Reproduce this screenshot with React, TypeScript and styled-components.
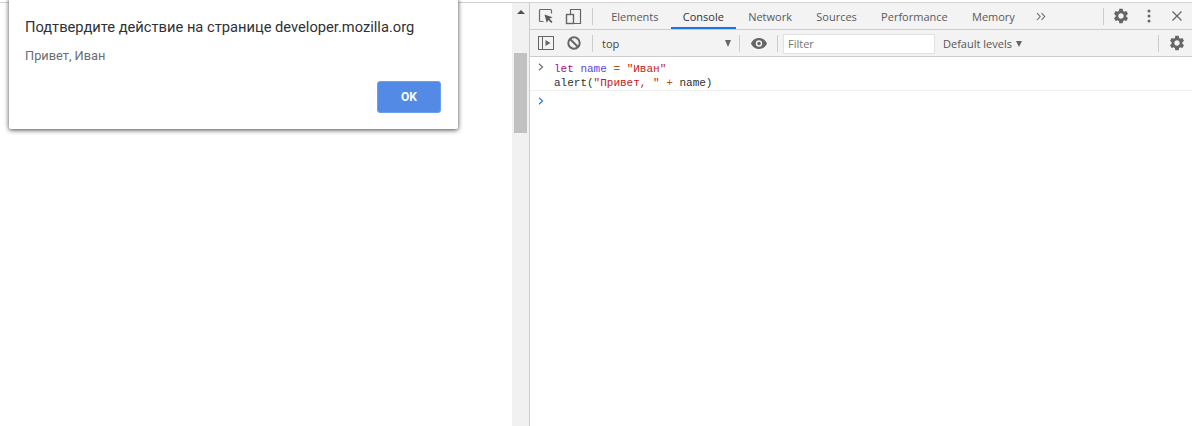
import React from "react";
import styled, { createGlobalStyle } from "styled-components";
import { MdSettings } from "react-icons/md";

const Global = createGlobalStyle`
  html, body { margin: 0; padding: 0; background: #fff; }
  #root { width: 1192px; height: 426px; overflow: hidden; }
`;

const Page = styled.div`
  position: relative;
  display: flex;
  flex-direction: column;
  width: 1192px;
  height: 426px;
  overflow: hidden;
  background: #fff;
`;
const TopGap = styled.div`
  height: 2px;
  flex: none;
  background: #fff;
  border-bottom: 1px solid #d2d2d2;
`;
const Main = styled.div`
  flex: 1;
  display: flex;
  min-height: 0;
`;
const Viewport = styled.div`
  width: 512px;
  flex: none;
  background: #fff;
`;
const Scrollbar = styled.div`
  width: 17px;
  flex: none;
  display: flex;
  flex-direction: column;
  align-items: center;
  padding-top: 7px;
  box-sizing: border-box;
  background: #f1f1f1;
`;
const ScrollArrow = styled.div`
  width: 0;
  height: 0;
  border-left: 4px solid transparent;
  border-right: 4px solid transparent;
  border-bottom: 4px solid #505050;
`;
const Thumb = styled.div`
  width: 13px;
  height: 80px;
  margin-top: 39px;
  background: #c1c1c1;
`;
const DevTools = styled.div`
  flex: 1;
  display: flex;
  flex-direction: column;
  min-width: 0;
  border-left: 1px solid #cdcdcd;
  font-family: "Open Sans", "Noto Sans", sans-serif;
`;
const TabBar = styled.div`
  height: 26px;
  flex: none;
  display: flex;
  align-items: center;
  background: #f3f3f3;
  border-bottom: 1px solid #ccc;
  padding-left: 5px;
`;
const ConsoleBar = styled.div`
  height: 26px;
  flex: none;
  display: flex;
  align-items: center;
  background: #f3f3f3;
  border-bottom: 1px solid #ccc;
  padding-left: 5px;
`;
const IconSlot = styled.div<{ $w: number }>`
  width: ${(p) => p.$w}px;
  flex: none;
  display: flex;
  align-items: center;
  justify-content: center;
  svg { display: block; }
`;
const Divider = styled.div<{ $ml?: number; $mr?: number }>`
  width: 1px;
  height: 17px;
  flex: none;
  background: #ccc;
  margin-left: ${(p) => p.$ml ?? 0}px;
  margin-right: ${(p) => p.$mr ?? 0}px;
`;
const Tab = styled.div<{ $active?: boolean }>`
  height: 26px;
  box-sizing: border-box;
  flex: none;
  padding: 2px 12.15px 0;
  display: flex;
  align-items: center;
  font-size: 11px;
  color: ${(p) => (p.$active ? "#333" : "#5a5a5a")};
  border-bottom: 2px solid ${(p) => (p.$active ? "#1a73e8" : "transparent")};
`;
const Select = styled.div`
  width: 146px;
  flex: none;
  display: flex;
  align-items: center;
  justify-content: space-between;
  box-sizing: border-box;
  padding: 1px 8px 0 9px;
  font-size: 11px;
  color: #444;
`;
const CaretDown = styled.div`
  width: 0;
  height: 0;
  border-left: 3.5px solid transparent;
  border-right: 3.5px solid transparent;
  border-top: 7px solid #666;
`;
const FilterInput = styled.div`
  width: 152px;
  height: 20px;
  flex: none;
  box-sizing: border-box;
  margin-left: 5px;
  margin-top: 1px;
  padding-left: 4px;
  border: 1px solid #e2e2e2;
  background: #fff;
  display: flex;
  align-items: center;
  font-size: 11px;
  color: #757575;
`;
const Levels = styled.div`
  width: 223px;
  flex: none;
  display: flex;
  align-items: center;
  gap: 4px;
  padding: 1px 0 0 8px;
  box-sizing: border-box;
  font-size: 11px;
  color: #555;
`;
const SmallCaret = styled(CaretDown)`
  border-top-width: 6px;
`;
const ConsoleBody = styled.div`
  flex: 1;
  background: #fff;
  font-family: "Liberation Mono", monospace;
  font-size: 11px;
  line-height: 14px;
`;
const Entry = styled.div`
  display: flex;
  padding: 5px 0 2px 8px;
  box-sizing: border-box;
  height: 34px;
  border-bottom: 1px solid #f0f0f0;
`;
const PromptRow = styled.div`
  display: flex;
  padding: 5px 0 0 8px;
`;
const PromptSlot = styled.div`
  width: 16px;
  flex: none;
  padding-top: 1px;
  svg { display: block; }
`;
const Code = styled.div`
  white-space: pre;
  color: #303030;
`;
const Kw = styled.span`
  color: #aa0d91;
`;
const Var = styled.span`
  color: #1c00cf;
  opacity: 0.75;
`;
const Op = styled.span`
  color: #a9541f;
`;
const Str = styled.span`
  color: #c41a16;
`;
const Dialog = styled.div`
  position: absolute;
  left: 9px;
  top: -2px;
  width: 449px;
  height: 131px;
  box-sizing: border-box;
  padding: 20px 17px 16px 16px;
  background: #fff;
  border-radius: 2px;
  box-shadow: 0 1px 4px rgba(0, 0, 0, 0.6), 0 1px 6px rgba(0, 0, 0, 0.2);
  display: flex;
  flex-direction: column;
  font-family: Roboto, "Noto Sans", sans-serif;
`;
const DialogTitle = styled.div`
  font-size: 14.7px;
  line-height: 18px;
  color: #303134;
`;
const DialogMessage = styled.div`
  margin-top: 12px;
  font-size: 12.8px;
  line-height: 16px;
  color: #6a6e73;
`;
const DialogFooter = styled.div`
  margin-top: auto;
  display: flex;
  justify-content: flex-end;
`;
const OkButton = styled.div`
  width: 64px;
  height: 32px;
  box-sizing: border-box;
  border-radius: 3px;
  border: 1px solid #6d9eeb;
  background: #528ae6;
  color: #fff;
  font-size: 12px;
  font-weight: 700;
  display: flex;
  align-items: center;
  justify-content: center;
`;

const Gear = () => <MdSettings size={18} color="#666" />;
const Inspect = () => (
  <svg width="16" height="16" viewBox="0 0 16 16">
    <path d="M5.500 13.500H2.500a1 1 0 0 1-1-1v-10a1 1 0 0 1 1-1h10a1 1 0 0 1 1 1V5.500" fill="none" stroke="#6a6a6a" strokeWidth="1.200" />
    <path d="M6.500 6.500l8 2.800-3 1.400 3 3-1.200 1.200-3-3-1.500 3z" fill="#5a5a5a" />
  </svg>
);
const Device = () => (
  <svg width="17" height="17" viewBox="0 0 17 17">
    <path d="M5.500 6V1.500h10v14h-7" fill="none" stroke="#666" strokeWidth="1.200" />
    <rect x="1.500" y="6.500" width="7" height="9" fill="none" stroke="#666" strokeWidth="1.400" />
  </svg>
);
const SidebarToggle = () => (
  <svg width="16" height="14" viewBox="0 0 16 14">
    <rect x="0.500" y="0.500" width="15" height="13" fill="none" stroke="#666" />
    <path d="M4.500 0.500v13" stroke="#666" />
    <path d="M7.500 4l5 3-5 3z" fill="#666" />
  </svg>
);
const Block = () => (
  <svg width="14" height="14" viewBox="0 0 14 14">
    <circle cx="7" cy="7" r="5.700" fill="none" stroke="#666" strokeWidth="2" />
    <path d="M3 3l8 8" stroke="#666" strokeWidth="2" />
  </svg>
);
const Eye = () => (
  <svg width="16" height="11" viewBox="0 0 16 11">
    <path fillRule="evenodd" fill="#666" d="M8 0c3.600 0 6.600 2.200 8 5.500-1.400 3.300-4.400 5.500-8 5.500S1.400 8.800 0 5.500C1.400 2.200 4.400 0 8 0zm0 2.300a3.200 3.200 0 1 0 0 6.400 3.200 3.200 0 0 0 0-6.400zm0 1.400a1.800 1.800 0 1 1 0 3.600 1.800 1.800 0 0 1 0-3.600z" />
  </svg>
);
const More = () => (
  <svg width="10" height="9" viewBox="0 0 10 9">
    <path d="M1 1l3.200 3.500L1 8M5.500 1l3.200 3.500L5.500 8" fill="none" stroke="#666" strokeWidth="1.100" />
  </svg>
);
const Dots = () => (
  <svg width="4" height="14" viewBox="0 0 4 14">
    <circle cx="2" cy="2" r="1.500" fill="#666" />
    <circle cx="2" cy="7" r="1.500" fill="#666" />
    <circle cx="2" cy="12" r="1.500" fill="#666" />
  </svg>
);
const Close = () => (
  <svg width="10" height="10" viewBox="0 0 10 10">
    <path d="M0.500 0.500l9 9M9.500 0.500l-9 9" stroke="#666" strokeWidth="1.300" />
  </svg>
);
const Chevron = ({ color }: { color: string }) => (
  <svg width="6" height="8" viewBox="0 0 6 8">
    <path d="M1 0.800L4.500 4 1 7.200" fill="none" stroke={color} strokeWidth="1.300" />
  </svg>
);

const tabs = ["Elements", "Console", "Network", "Sources", "Performance", "Memory"];

export default function App() {
  return (
    <Page>
      <Global />
      <TopGap />
      <Main>
        <Viewport />
        <Scrollbar>
          <ScrollArrow />
          <Thumb />
        </Scrollbar>
        <DevTools>
          <TabBar>
            <IconSlot $w={21}><Inspect /></IconSlot>
            <IconSlot $w={34}><Device /></IconSlot>
            <Divider $ml={2} $mr={6} />
            {tabs.map((t) => (
              <Tab key={t} $active={t === "Console"}>{t}</Tab>
            ))}
            <IconSlot $w={27}><More /></IconSlot>
            <Divider $ml={49} />
            <IconSlot $w={34}><Gear /></IconSlot>
            <IconSlot $w={22}><Dots /></IconSlot>
            <IconSlot $w={34}><Close /></IconSlot>
          </TabBar>
          <ConsoleBar>
            <IconSlot $w={21}><SidebarToggle /></IconSlot>
            <IconSlot $w={36}><Block /></IconSlot>
            <Divider />
            <Select>top<CaretDown /></Select>
            <Divider />
            <IconSlot $w={37}><Eye /></IconSlot>
            <Divider />
            <FilterInput>Filter</FilterInput>
            <Levels>Default levels<SmallCaret /></Levels>
            <Divider />
            <IconSlot $w={36}><Gear /></IconSlot>
          </ConsoleBar>
          <ConsoleBody>
            <Entry>
              <PromptSlot><Chevron color="#777" /></PromptSlot>
              <Code>
                <Kw>let</Kw> <Var>name</Var> <Op>=</Op> <Str>"Иван"</Str>{"\n"}
                alert(<Str>"Привет, "</Str> <Op>+</Op> name)
              </Code>
            </Entry>
            <PromptRow>
              <PromptSlot><Chevron color="#367cf1" /></PromptSlot>
            </PromptRow>
          </ConsoleBody>
        </DevTools>
      </Main>
      <Dialog>
        <DialogTitle>Подтвердите действие на странице developer.mozilla.org</DialogTitle>
        <DialogMessage>Привет, Иван</DialogMessage>
        <DialogFooter><OkButton>OK</OkButton></DialogFooter>
      </Dialog>
    </Page>
  );
}
